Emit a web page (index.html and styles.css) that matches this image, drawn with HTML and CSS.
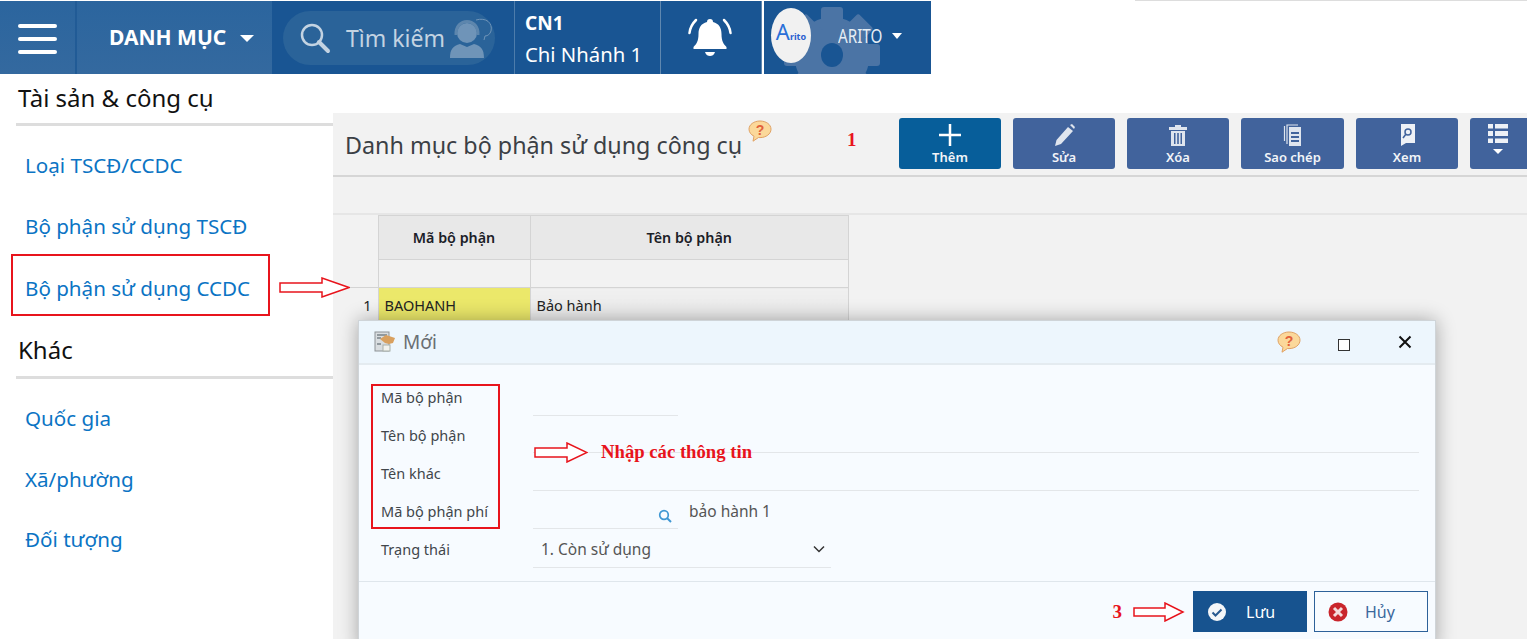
FILE: index.html
```html
<!DOCTYPE html>
<html lang="vi">
<head>
    <meta charset="UTF-8">
    <meta name="viewport" content="width=device-width, initial-scale=1.0">
    <title>Danh mục bộ phận sử dụng công cụ</title>
    <link rel="stylesheet" href="styles.css">
</head>
<body>

    <svg class="icon-defs" width="0" height="0">
        <defs>
            <symbol id="help" viewBox="0 0 24 22">
                <path d="M12 1C5.900 1 1 4.600 1 9.200c0 3 2 5.500 5 7l-1 5 5.500-3.700c.5 0 1 .1 1.500.1 6.100 0 11-3.700 11-8.400S18.100 1 12 1z" fill="#fbd89a" stroke="#e0a264" stroke-width="1"/>
                <text x="12" y="14.500" text-anchor="middle" class="help-mark">?</text>
            </symbol>
        </defs>
    </svg>

    <header class="topbar">
        <button class="menu-btn">
            <span></span><span></span><span></span>
        </button>
        <div class="catalog">DANH MỤC <i class="caret"></i></div>
        <div class="search-area">
            <div class="search-pill">
                <svg class="search-icon" width="32" height="32" viewBox="0 0 32 32">
                    <circle cx="13" cy="13" r="10" fill="none" stroke="#c3d3e2" stroke-width="2.500"/>
                    <path d="M20 20l9 9" stroke="#c3d3e2" stroke-width="4" stroke-linecap="round"/>
                </svg>
                <span class="search-text">Tìm kiếm</span>
                <svg class="agent-icon" width="44" height="44" viewBox="0 0 44 44">
                    <circle cx="17" cy="17" r="10" fill="#6f94b8"/>
                    <path d="M0 42c0-9 3-12 10-14l7 3 7-3c7 2 10 5 10 14z" fill="#6f94b8"/>
                    <path d="M6 19C5 1 29 1 28 19" fill="none" stroke="#5d86ad" stroke-width="3"/>
                    <path d="M26 4c10-3 17 3 15 11-1 3-3 5-6 5l-1 4" fill="none" stroke="#6f94b8" stroke-width="1"/>
                </svg>
            </div>
        </div>
        <div class="branch">
            <strong>CN1</strong>
            <span>Chi Nhánh 1</span>
        </div>
        <div class="bell">
            <svg width="46" height="46" viewBox="0 0 46 46">
                <path d="M23 5c-2 0-3 1-3 3-6 1.500-8.500 6-8.500 12 0 7-2 10-5 13v2h33v-2c-3-3-5-6-5-13 0-6-2.500-10.500-8.500-12 0-2-1-3-3-3z" fill="#fff"/>
                <path d="M18 38h10c-1 3-3 4-5 4s-4-1-5-4z" fill="#fff"/>
                <path d="M9 6C5 10 3 14 2.500 19M37 6c4 4 6 8 6.500 13" fill="none" stroke="#fff" stroke-width="2.500" stroke-linecap="round"/>
            </svg>
        </div>
        <div class="user">
            <svg class="gear" width="100" height="100" viewBox="0 0 100 100">
                <g fill="#4b74a5">
                    <circle cx="50" cy="50" r="38"/>
                    <rect x="39" y="2" width="22" height="96" rx="3"/>
                    <rect x="39" y="2" width="22" height="96" rx="3" transform="rotate(45 50 50)"/>
                    <rect x="39" y="2" width="22" height="96" rx="3" transform="rotate(90 50 50)"/>
                    <rect x="39" y="2" width="22" height="96" rx="3" transform="rotate(135 50 50)"/>
                </g>
                <ellipse cx="50" cy="50" rx="11" ry="12" fill="#195593"/>
            </svg>
            <div class="logo">
                <span class="logo-a">A</span><span class="logo-rest">rito</span>
            </div>
            <span class="user-name">ARITO</span>
            <i class="caret small"></i>
        </div>
        <div class="topbar-rest"></div>
    </header>

    <div class="page">
        <nav class="sidebar">
            <h3>Tài sản &amp; công cụ</h3>
            <a href="#">Loại TSCĐ/CCDC</a>
            <a href="#">Bộ phận sử dụng TSCĐ</a>
            <a href="#" class="marked">Bộ phận sử dụng CCDC</a>
            <h3 class="second">Khác</h3>
            <a href="#">Quốc gia</a>
            <a href="#">Xã/phường</a>
            <a href="#">Đối tượng</a>
        </nav>

        <main class="content">
            <div class="title-bar">
                <h1>Danh mục bộ phận sử dụng công cụ</h1>
                <svg class="help-title" width="24" height="22"><use href="#help"/></svg>
                <span class="step-one">1</span>
                <div class="actions">
                    <button class="action primary">
                        <svg width="24" height="24" viewBox="0 0 24 24"><path d="M12 1v22M1 12h22" stroke="#fff" stroke-width="2.500"/></svg>
                        Thêm
                    </button>
                    <button class="action">
                        <svg width="24" height="24" viewBox="0 0 24 24"><path d="M3 23l1.500-6L16 4l5 4L9 21z M18 2l2-1 3 3-1 2z" fill="#dfe5ee"/></svg>
                        Sửa
                    </button>
                    <button class="action">
                        <svg width="24" height="24" viewBox="0 0 24 24"><path d="M9 2h6v2h6v3H3V4h6zM5 8h14v15H5zM8 10v11h1.500V10zm3.200 0v11h1.600V10zm3.300 0v11H16V10z" fill="#dfe5ee" fill-rule="evenodd"/></svg>
                        Xóa
                    </button>
                    <button class="action copy">
                        <svg width="24" height="24" viewBox="0 0 24 24"><path d="M8 4h12v19H8zM10 9v2h8V9zm0 4v2h8v-2zm0 4v2h8v-2z" fill="#dfe5ee" fill-rule="evenodd"/><path d="M6 21V2h11M3.500 18V3" fill="none" stroke="#dfe5ee" stroke-width="1.200"/></svg>
                        Sao chép
                    </button>
                    <button class="action">
                        <svg width="24" height="24" viewBox="0 0 24 24"><path d="M6 1h14v19H11l-5 3z" fill="#eef1f6"/><circle cx="13" cy="9" r="3" fill="none" stroke="#41639c" stroke-width="1.500"/><path d="M11 11l-3 4" stroke="#41639c" stroke-width="1.500"/></svg>
                        Xem
                    </button>
                    <button class="action more">
                        <svg width="24" height="24" viewBox="0 0 24 24"><path d="M2 1h5v4.500H2zM9 1h13v4.500H9zM2 8h5v5H2zM9 8h13v5H9zM2 15.500h5V20H2zM9 15.500h13V20H9z" fill="#eef1f6"/></svg>
                        <i class="caret tiny"></i>
                    </button>
                </div>
            </div>
            <div class="filter-strip"></div>
            <table class="grid">
                <thead>
                    <tr>
                        <th class="row-no blank"></th>
                        <th class="col-code">Mã bộ phận</th>
                        <th class="col-name">Tên bộ phận</th>
                    </tr>
                </thead>
                <tbody>
                    <tr class="filter-row">
                        <td class="row-no blank"></td>
                        <td></td>
                        <td></td>
                    </tr>
                    <tr class="data-row">
                        <td class="row-no">1</td>
                        <td class="active">BAOHANH</td>
                        <td>Bảo hành</td>
                    </tr>
                </tbody>
            </table>
        </main>
    </div>

    <!-- popup -->
    <section class="dialog">
        <div class="dialog-head">
            <svg class="dialog-icon" width="22" height="22" viewBox="0 0 22 22">
                <rect x="1" y="1" width="14" height="19" fill="#d9dde0" stroke="#8d9296"/>
                <path d="M3 4h10M3 7h4M3 13h4" stroke="#7a8288" stroke-width="1.500"/>
                <path d="M6 8l6-4 9 3-2 5-4 1-4-1z" fill="#d9a05f"/>
                <rect x="9" y="14" width="7" height="6" fill="#f2f2ee" stroke="#a9b0a9"/>
            </svg>
            <span class="dialog-title">Mới</span>
            <svg class="help-dialog" width="24" height="22"><use href="#help"/></svg>
            <i class="maximize"></i>
            <svg class="close" width="14" height="14" viewBox="0 0 14 14"><path d="M1.500 1.500l11 11M12.500 1.500l-11 11" stroke="#111" stroke-width="2"/></svg>
        </div>
        <form class="dialog-body">
            <label>Mã bộ phận</label>
            <div class="field short first"></div>
            <label>Tên bộ phận</label>
            <div class="field wide"></div>
            <label>Tên khác</label>
            <div class="field wide"></div>
            <label>Mã bộ phận phí</label>
            <div class="field-group">
                <div class="field short">
                    <svg class="field-search" width="14" height="14" viewBox="0 0 14 14">
                        <circle cx="6" cy="6" r="4.300" fill="none" stroke="#3f97d3" stroke-width="1.700"/>
                        <path d="M9 9l4 4" stroke="#3f97d3" stroke-width="2"/>
                    </svg>
                </div>
                <span class="field-note">bảo hành 1</span>
            </div>
            <label>Trạng thái</label>
            <div class="field select">
                <span>1. Còn sử dụng</span>
                <svg width="12" height="8" viewBox="0 0 12 8"><path d="M1 1.500l5 5 5-5" fill="none" stroke="#333" stroke-width="1.500"/></svg>
            </div>
        </form>
        <div class="dialog-foot">
            <span class="step-three">3</span>
            <svg class="arrow-foot" width="52" height="20" viewBox="0 0 52 20"><path d="M1 6h31V1l18 9-18 9v-5H1z" fill="#fff" stroke="#e8141c" stroke-width="1.500"/></svg>
            <button class="btn save">
                <svg width="20" height="20" viewBox="0 0 20 20"><circle cx="10" cy="10" r="9" fill="#f4f6f8"/><path d="M5.500 10.500l3 3 6-6" fill="none" stroke="#28598f" stroke-width="2"/></svg>
                <span>Lưu</span>
            </button>
            <button class="btn cancel">
                <svg width="20" height="20" viewBox="0 0 20 20"><circle cx="10" cy="10" r="9.500" fill="#c9252c"/><path d="M6 6l8 8M14 6l-8 8" stroke="#f5dcdc" stroke-width="3"/></svg>
                <span>Hủy</span>
            </button>
        </div>
        <div class="label-box"></div>
        <div class="note">
            <svg width="54" height="21" viewBox="0 0 54 21"><path d="M1 6h32V1l20 9.500L33 20v-5H1z" fill="#fff" stroke="#e8141c" stroke-width="1.500"/></svg>
            <span>Nhập các thông tin</span>
        </div>
    </section>

    <svg class="arrow-side" width="71" height="21" viewBox="0 0 71 21"><path d="M1 6h42V1l27 9.500L43 20v-5H1z" fill="#fff" stroke="#e8141c" stroke-width="1.500"/></svg>

</body>
</html>
```

FILE: styles.css
```css
* {
    box-sizing: border-box;
}
html, body {
    height: 100%;
}
body {
    font-family: "Noto Sans", Arial, sans-serif;
    margin: 0;
    overflow: hidden;
    background: #fff;
    color: #222;
    position: relative;
}
.icon-defs {
    position: absolute;
}
.help-mark {
    font: bold 14px "Liberation Sans", sans-serif;
    fill: #e2603a;
}
button {
    font-family: inherit;
    border: 0;
    padding: 0;
}

/* top bar */
.topbar {
    display: flex;
    height: 74px;
    padding-top: 1px;
    color: #fff;
}
.menu-btn {
    width: 77px;
    background: linear-gradient(#2b659e, #34699f);
    border-right: 2px solid #215b96;
    display: flex;
    flex-direction: column;
    gap: 9px;
    padding: 23px 18px 0 18px;
}
.menu-btn span {
    display: block;
    height: 4px;
    background: #fff;
    border-radius: 2px;
}
.catalog {
    width: 195px;
    background: linear-gradient(#2b659e, #34699f);
    font-size: 21px;
    font-weight: 700;
    padding: 22px 0 0 32px;
    white-space: nowrap;
}
.caret {
    display: inline-block;
    border-left: 7px solid transparent;
    border-right: 7px solid transparent;
    border-top: 7px solid #fff;
    margin-left: 8px;
    vertical-align: 3px;
}
.search-area {
    width: 243px;
    background: #195593;
    padding: 10px 0 0 11px;
    border-right: 1px solid #4d7cab;
}
.search-pill {
    width: 212px;
    height: 54px;
    border-radius: 27px;
    background: #2a6399;
    display: flex;
    align-items: center;
    padding-left: 16px;
    overflow: hidden;
}
.search-text {
    font-size: 23px;
    color: #c3d3e2;
    margin-left: 15px;
    white-space: nowrap;
}
.search-icon {
    flex: none;
}
.agent-icon {
    flex: none;
    margin-left: 5px;
}
.branch {
    width: 146px;
    background: #195593;
    border-left: 1px solid #195593;
    border-right: 1px solid #6088b0;
    display: flex;
    flex-direction: column;
    padding: 9px 0 0 9px;
    white-space: nowrap;
}
.branch strong {
    font-size: 19px;
    line-height: 27px;
}
.branch span {
    font-size: 20.300px;
    line-height: 34px;
}
.bell {
    width: 101px;
    background: #195593;
    border-right: 1px solid #6088b0;
    padding: 13px 0 0 26px;
}
.user {
    width: 167px;
    margin-left: 2px;
    background: #195593;
    display: flex;
    align-items: center;
    position: relative;
    overflow: hidden;
    padding-bottom: 4px;
}
.gear {
    position: absolute;
    left: 18px;
    top: 4px;
}
.logo {
    position: relative;
    width: 40px;
    height: 55px;
    margin-left: 7px;
    border-radius: 50%;
    background: #f1f1f1;
    display: flex;
    align-items: baseline;
    justify-content: center;
    padding-top: 10px;
}
.logo-a {
    font-size: 22px;
    line-height: 26px;
    color: #2a6fd8;
}
.logo-rest {
    font-size: 9px;
    font-weight: 700;
    color: #2a5fd0;
}
.user-name {
    position: relative;
    font-size: 19px;
    color: #e6edf4;
    margin-left: 27px;
    transform: scaleX(.8);
    transform-origin: left;
    margin-right: -9px;
}
.caret.small {
    position: relative;
    border-left-width: 5px;
    border-right-width: 5px;
    border-top-width: 6px;
    margin-left: 8px;
    vertical-align: 0;
}
.topbar-rest {
    flex: 1;
    margin-left: 204px;
    margin-top: -1px;
    height: 1px;
    background: #ddd;
}

/* page */
.page {
    display: flex;
}
.sidebar {
    width: 333px;
    flex: none;
    padding-left: 16px;
}
.sidebar h3 {
    font-size: 24px;
    font-weight: 400;
    color: #111;
    margin: 0 0 9px 0;
    padding: 8px 0 8px 2px;
    line-height: 32px;
    height: 52px;
    border-bottom: 3px solid #ddd;
}
.sidebar h3.second {
    margin-top: 11px;
    padding-top: 7px;
}
.sidebar a {
    display: block;
    height: 60.500px;
    line-height: 60px;
    padding-left: 9px;
    font-size: 20.600px;
    color: #0b74c4;
    text-decoration: none;
    white-space: nowrap;
}
.sidebar a.marked {
    margin: -2px 0 0 -5px;
    padding-left: 12px;
    border: 2px solid #e8141c;
    line-height: 64px;
    width: 259px;
    height: 62px;
}
.content {
    flex: 1;
    margin-top: 39px;
    height: 526px;
    background: #f2f2f2;
}
.title-bar {
    height: 64px;
    border-bottom: 2px solid #d6d6d6;
    display: flex;
    position: relative;
    padding: 0 0 0 12px;
}
.title-bar h1 {
    margin: 14px 0 0 0;
    font-size: 23.300px;
    line-height: 36px;
    font-weight: 400;
    color: #3b4045;
    white-space: nowrap;
}
.help-title {
    margin: 7px 0 0 6px;
}
.step-one {
    position: absolute;
    left: 514px;
    top: 16px;
    font: bold 19px "Liberation Serif", serif;
    color: #e8141c;
}
.actions {
    position: absolute;
    left: 566px;
    top: 5px;
    display: flex;
    gap: 12px;
}
.action {
    width: 102px;
    height: 51px;
    border-radius: 3px;
    background: #41639c;
    color: #f2f4f8;
    font-size: 13px;
    font-weight: 600;
    display: flex;
    flex-direction: column;
    align-items: center;
    padding-top: 5px;
    line-height: 20px;
}
.action svg {
    flex: none;
}
.action.primary {
    background: #075e9a;
}
.action.copy {
    width: 103px;
}
.action.more {
    width: 62px;
    padding-right: 6px;
}
.caret.tiny {
    border-left-width: 5px;
    border-right-width: 5px;
    border-top-width: 5px;
    margin: 2px 0 0 0;
}
.filter-strip {
    height: 38px;
    border-bottom: 2px solid #e6e6e6;
}
.grid {
    border-collapse: collapse;
    table-layout: fixed;
    width: 516px;
    font-size: 14.500px;
}
.grid th, .grid td {
    border: 1px solid #d4d4d4;
    padding: 0 6px;
}
.grid th {
    background: #e8e8e8;
    height: 44px;
    font-size: 14.300px;
    font-weight: 600;
    color: #1b2027;
}
.row-no {
    width: 45px;
    color: #6b7580;
    text-align: right;
    border-left: 0 !important;
}
.row-no.blank {
    background: #f2f2f2 !important;
    border-top: 0 !important;
    border-bottom: 0 !important;
}
.col-code {
    width: 152px;
}
.filter-row td {
    height: 28px;
}
.data-row td {
    height: 44px;
    vertical-align: top;
    padding-top: 7px;
    color: #222;
    background: linear-gradient(#f0f0f0, #e6e6e6);
}
.data-row td.row-no {
    background: none;
    border-bottom: 0;
}
.data-row td.active {
    background: #ebe86a;
}

/* popup */
.dialog {
    position: absolute;
    left: 358px;
    top: 320px;
    width: 1078px;
    height: 330px;
    background: #f7fbff;
    border: 1px solid #cfd4d8;
    box-shadow: 0 0 18px rgba(0, 0, 0, .32);
}
.dialog-head {
    height: 44px;
    background: #edf6fd;
    border-bottom: 2px solid #e4ebf0;
    display: flex;
    align-items: center;
    padding-left: 15px;
}
.dialog-title {
    font-size: 19px;
    color: #6a6f74;
    margin-left: 7px;
    flex: 1;
}
.help-dialog {
    margin-right: 37px;
}
.maximize {
    width: 12px;
    height: 12px;
    border: 1.500px solid #333;
    background: #fff;
    margin: 6px 48px 0 0;
}
.close {
    margin-right: 23px;
}
.dialog-body {
    display: grid;
    grid-template-columns: 152px 1fr;
    grid-auto-rows: 38px;
    padding: 14px 0 0 22px;
    height: 217px;
    border-bottom: 1px solid #dfe6ec;
    font-size: 14.500px;
    color: #41464b;
}
.dialog-body label {
    line-height: 37px;
    height: 38px;
}
.field {
    height: 36px;
    border-bottom: 1px solid #e3e6e9;
}
.field.short {
    width: 145px;
    position: relative;
}
.field.first {
    height: 37px;
}
.field.wide {
    width: 886px;
}
.field-group {
    display: flex;
}
.field-search {
    position: absolute;
    right: 6px;
    top: 16px;
}
.field-note {
    margin-left: 11px;
    font-size: 15.500px;
    line-height: 36px;
    color: #555;
}
.field.select {
    width: 298px;
    display: flex;
    align-items: center;
    justify-content: space-between;
    padding: 0 6px 0 8px;
    font-size: 15.500px;
    color: #555;
    height: 37px;
}
.dialog-foot {
    display: flex;
    align-items: flex-start;
    justify-content: flex-end;
    padding: 9px 7px 0 0;
    gap: 7px;
}
.step-three {
    font: bold 19px "Liberation Serif", serif;
    color: #e8141c;
    margin: 10px 4px 0 0;
}
.arrow-foot {
    margin: 11px 1px 0 0;
}
.btn {
    width: 114px;
    height: 41px;
    display: flex;
    align-items: center;
    padding-left: 14px;
    font-size: 16px;
}
.btn span {
    margin-left: 19px;
}
.btn.save {
    background: #17538f;
    color: #fff;
}
.btn.cancel {
    background: #f7fbff;
    border: 1px solid #2d6199;
    color: #3b689c;
    padding-left: 13px;
}
.btn.cancel span {
    margin-left: 17px;
}
.label-box {
    position: absolute;
    left: 12px;
    top: 63px;
    width: 129px;
    height: 145px;
    border: 2px solid #e8141c;
}
.note {
    position: absolute;
    left: 175px;
    top: 120px;
    display: flex;
    align-items: center;
}
.note span {
    font: bold 18.700px "Liberation Serif", serif;
    color: #e8141c;
    margin-left: 13px;
    white-space: nowrap;
}
.arrow-side {
    position: absolute;
    left: 279px;
    top: 277px;
}
```
